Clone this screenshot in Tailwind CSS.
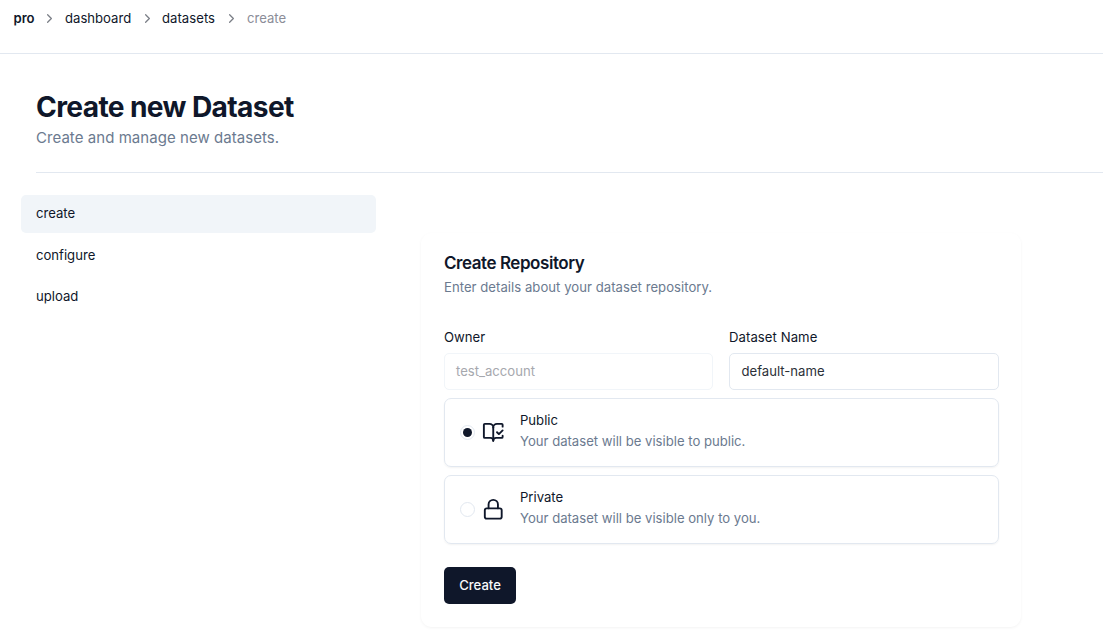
<!DOCTYPE html>
<html lang="en">
<head>
<meta charset="utf-8">
<title>Create new Dataset</title>
<script src="https://cdn.jsdelivr.net/npm/@tailwindcss/browser@4"></script>
</head>
<body class="w-[1103px] h-[638px] overflow-hidden bg-white font-['Inter',sans-serif] text-[13.125px] leading-[18px] text-[#0f172a]">
<header class="h-[54px] border-b border-slate-200 pl-[13.5px] pt-[9px]">
  <nav class="flex items-center whitespace-nowrap">
    <span class="w-[28.5px] font-semibold">pro</span>
    <svg class="w-[15px] h-[15px] mr-[8px] text-[#7b7f87]" viewBox="0 0 24 24" fill="none" stroke="currentColor" stroke-width="2" stroke-linecap="round" stroke-linejoin="round"><path d="m9 18 6-6-6-6"/></svg>
    <span class="w-[75px]">dashboard</span>
    <svg class="w-[15px] h-[15px] mr-[7px] text-[#7b7f87]" viewBox="0 0 24 24" fill="none" stroke="currentColor" stroke-width="2" stroke-linecap="round" stroke-linejoin="round"><path d="m9 18 6-6-6-6"/></svg>
    <span class="w-[62px] tracking-[0.04px]">datasets</span>
    <svg class="w-[15px] h-[15px] mr-[8px] text-[#7b7f87]" viewBox="0 0 24 24" fill="none" stroke="currentColor" stroke-width="2" stroke-linecap="round" stroke-linejoin="round"><path d="m9 18 6-6-6-6"/></svg>
    <span class="text-[#8b8d98]">create</span>
  </nav>
</header>
<main>
  <div class="ml-9 pt-[37px] h-[119px] border-b border-slate-200">
    <h1 class="text-[28.125px] leading-[33px] font-bold tracking-[-0.62px]">Create new Dataset</h1>
    <p class="text-[15px] leading-[22px] mt-[3px] tracking-[0.05px] text-[#6b7a8f]">Create and manage new datasets.</p>
  </div>
  <div class="flex pl-[21px] pt-[22px]">
    <aside class="w-[355px] flex flex-col gap-[4px]">
      <a class="h-[38px] rounded-[5px] bg-slate-100 px-[15px] pb-[2px] flex items-center">create</a>
      <a class="h-[37px] rounded-[5px] px-[15px] pb-[1px] flex items-center">configure</a>
      <a class="h-[37px] rounded-[5px] px-[15px] pb-[1px] flex items-center">upload</a>
    </aside>
    <section class="ml-[45px] mt-[38px] w-[600px] h-[394px] rounded-[11px] shadow-[0_1px_3px_0_rgb(0_0_0/0.05)] pl-[23px] pr-[22px] pt-[21px]">
      <h2 class="text-[17px] leading-[18px] font-semibold tracking-[-0.45px]">Create Repository</h2>
      <p class="mt-[6px] tracking-[0.04px] text-[#6b7a8f]">Enter details about your dataset repository.</p>
      <div class="mt-[32px] grid grid-cols-[269px_270px] gap-[16px]">
        <div>
          <label class="block">Owner</label>
          <div class="mt-[7px] h-[37px] rounded-[5px] border border-slate-100 px-[11px] pb-[1px] flex items-center text-[#a6a8ae]">test_account</div>
        </div>
        <div>
          <label class="block tracking-[0.08px]">Dataset Name</label>
          <div class="mt-[7px] h-[37px] rounded-[5px] border border-slate-200 px-[11.5px] pb-[1px] flex items-center text-[#2b3038]">default-name</div>
        </div>
      </div>
      <div class="mt-[8px] h-[69px] rounded-[7px] border border-slate-200 shadow-[0_1px_2px_0_rgb(0_0_0/0.05)] pl-[15px] flex items-center">
        <span class="w-[15px] h-[15px] rounded-full border border-slate-200 flex items-center justify-center"><span class="w-[9px] h-[9px] rounded-full bg-[#0f172a]"></span></span>
        <svg class="w-[22.5px] h-[22.5px] ml-[7px] mr-[0.5px] -mt-[1px]" viewBox="0 0 24 24" fill="none" stroke="currentColor" stroke-width="2" stroke-linecap="round" stroke-linejoin="round"><path d="M12 21V7"/><path d="m16 12 2 2 4-4"/><path d="M22 6V4a1 1 0 0 0-1-1h-5a4 4 0 0 0-4 4 4 4 0 0 0-4-4H3a1 1 0 0 0-1 1v13a1 1 0 0 0 1 1h6a3 3 0 0 1 3 3 3 3 0 0 1 3-3h6a1 1 0 0 0 1-1v-1.3"/></svg>
        <div class="ml-[15px] -mt-[5px]">
          <p>Public</p>
          <p class="mt-[3px] text-[#6b7a8f]">Your dataset will be visible to public.</p>
        </div>
      </div>
      <div class="mt-[8px] h-[69px] rounded-[7px] border border-slate-200 shadow-[0_1px_2px_0_rgb(0_0_0/0.05)] pl-[15px] flex items-center">
        <span class="w-[15px] h-[15px] rounded-full border border-slate-200"></span>
        <svg class="w-[22.5px] h-[22.5px] ml-[7px] mr-[0.5px] -mt-[1px]" viewBox="0 0 24 24" fill="none" stroke="currentColor" stroke-width="2" stroke-linecap="round" stroke-linejoin="round"><rect width="18" height="11" x="3" y="11" rx="2" ry="2"/><path d="M7 11V7a5 5 0 0 1 10 0v4"/></svg>
        <div class="ml-[15px] -mt-[5px]">
          <p>Private</p>
          <p class="mt-[3px] text-[#6b7a8f]">Your dataset will be visible only to you.</p>
        </div>
      </div>
      <button class="mt-[23px] w-[72px] h-[37px] rounded-[5px] bg-[#0f172a] text-slate-50 font-medium pb-[1px] flex items-center justify-center">Create</button>
    </section>
  </div>
</main>
</body>
</html>
